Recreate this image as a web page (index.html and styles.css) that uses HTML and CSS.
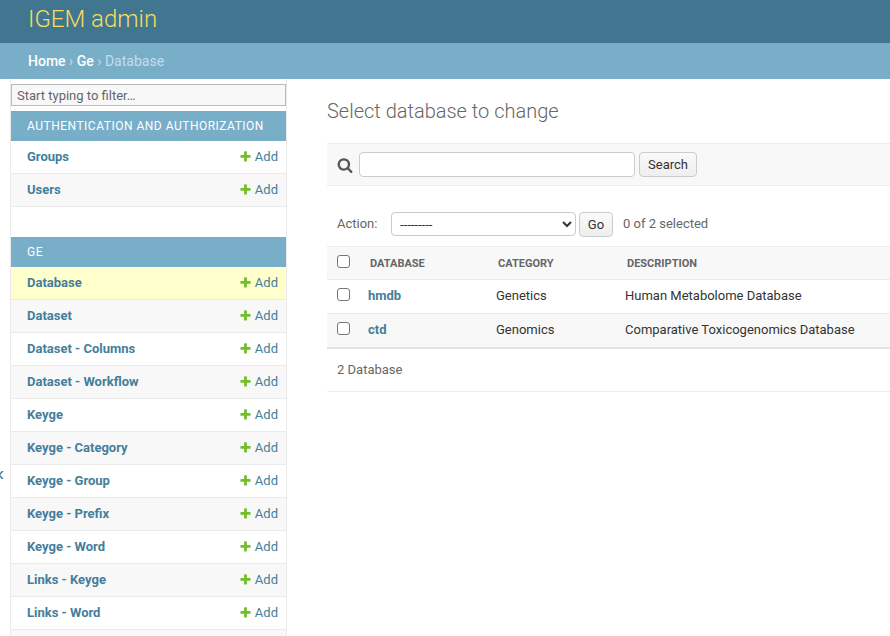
FILE: index.html
```html
<!DOCTYPE html>
<html>

<head>
  <meta charset="UTF-8">
  <meta name="viewport" content="width=device-width, initial-scale=1">
  <title>Select database to change | IGEM admin</title>
  <link rel="stylesheet" href="styles.css">
</head>

<body>
  <svg class="icon-defs" width="0" height="0">
    <symbol id="addlink" viewBox="0 0 1792 1792">
      <path fill="#70bf2b" d="M1600 796v192q0 40-28 68t-68 28h-416v416q0 40-28 68t-68 28h-192q-40 0-68-28t-28-68v-416h-416q-40 0-68-28t-28-68v-192q0-40 28-68t68-28h416v-416q0-40 28-68t68-28h192q40 0 68 28t28 68v416h416q40 0 68 28t28 68z"/>
    </symbol>
  </svg>

  <div id="header">
    <a class="branding" href="#">IGEM admin</a>
  </div>

  <div class="breadcrumbs">
    <a href="#">Home</a> › <a href="#">Ge</a> › Database
  </div>

  <div class="main">
    <button class="toggle-sidebar" aria-label="Toggle navigation">«</button>

    <div class="sidebar">
      <input class="nav-filter" type="search" placeholder="Start typing to filter…">

      <div class="module">
        <div class="caption">Authentication and Authorization</div>
        <div class="row"><a class="model" href="#">Groups</a><a class="addlink" href="#"><svg><use href="#addlink"/></svg>Add</a></div>
        <div class="row"><a class="model" href="#">Users</a><a class="addlink" href="#"><svg><use href="#addlink"/></svg>Add</a></div>
      </div>

      <div class="module">
        <div class="caption">Ge</div>
        <div class="row current"><a class="model" href="#">Database</a><a class="addlink" href="#"><svg><use href="#addlink"/></svg>Add</a></div>
        <div class="row"><a class="model" href="#">Dataset</a><a class="addlink" href="#"><svg><use href="#addlink"/></svg>Add</a></div>
        <div class="row"><a class="model" href="#">Dataset - Columns</a><a class="addlink" href="#"><svg><use href="#addlink"/></svg>Add</a></div>
        <div class="row"><a class="model" href="#">Dataset - Workflow</a><a class="addlink" href="#"><svg><use href="#addlink"/></svg>Add</a></div>
        <div class="row"><a class="model" href="#">Keyge</a><a class="addlink" href="#"><svg><use href="#addlink"/></svg>Add</a></div>
        <div class="row"><a class="model" href="#">Keyge - Category</a><a class="addlink" href="#"><svg><use href="#addlink"/></svg>Add</a></div>
        <div class="row"><a class="model" href="#">Keyge - Group</a><a class="addlink" href="#"><svg><use href="#addlink"/></svg>Add</a></div>
        <div class="row"><a class="model" href="#">Keyge - Prefix</a><a class="addlink" href="#"><svg><use href="#addlink"/></svg>Add</a></div>
        <div class="row"><a class="model" href="#">Keyge - Word</a><a class="addlink" href="#"><svg><use href="#addlink"/></svg>Add</a></div>
        <div class="row"><a class="model" href="#">Links - Keyge</a><a class="addlink" href="#"><svg><use href="#addlink"/></svg>Add</a></div>
        <div class="row"><a class="model" href="#">Links - Word</a><a class="addlink" href="#"><svg><use href="#addlink"/></svg>Add</a></div>
        <div class="row"></div>
      </div>
    </div>

    <div class="content">
      <h1>Select database to change</h1>

      <form class="toolbar">
        <svg class="search-icon" viewBox="0 0 1792 1792">
          <path fill="#555" d="M1216 832q0-185-131.5-316.5t-316.5-131.5-316.5 131.5-131.5 316.5 131.5 316.5 316.5 131.5 316.5-131.5 131.5-316.5zm512 832q0 52-38 90t-90 38q-54 0-90-38l-343-342q-179 124-399 124-143 0-273.5-55.5t-225-150-150-225-55.5-273.5 55.5-273.5 150-225 225-150 273.5-55.5 273.5 55.5 225 150 150 225 55.5 273.5q0 220-124 399l343 343q37 37 37 90z"/>
        </svg>
        <input class="search-input" type="text">
        <button class="btn search-btn" type="button">Search</button>
      </form>

      <div class="actions">
        <label>Action:</label>
        <select class="action-select">
          <option>---------</option>
          <option>Delete selected database</option>
        </select>
        <button class="btn go-btn" type="button">Go</button>
        <span class="counter">0 of 2 selected</span>
      </div>

      <table class="results">
        <thead>
          <tr>
            <th class="check"><input type="checkbox"></th>
            <th class="col-name">Database</th>
            <th class="col-cat">Category</th>
            <th>Description</th>
          </tr>
        </thead>
        <tbody>
          <tr>
            <td class="check"><input type="checkbox"></td>
            <td><a class="model" href="#">hmdb</a></td>
            <td>Genetics</td>
            <td>Human Metabolome Database</td>
          </tr>
          <tr class="alt">
            <td class="check"><input type="checkbox"></td>
            <td><a class="model" href="#">ctd</a></td>
            <td>Genomics</td>
            <td>Comparative Toxicogenomics Database</td>
          </tr>
        </tbody>
      </table>

      <p class="paginator">2 Database</p>
    </div>
  </div>
</body>

</html>
```

FILE: styles.css
```css
html, body {
  height: 100%;
}
body {
  margin: 0;
  overflow: hidden;
  font-family: Roboto, "Liberation Sans", sans-serif;
  font-size: 14px;
  color: #333;
  background: #fff;
}
a {
  text-decoration: none;
}
.icon-defs {
  position: absolute;
}

#header {
  height: 43px;
  padding-left: 28px;
  background: #417690;
  box-sizing: border-box;
}
.branding {
  display: block;
  font-size: 24px;
  font-weight: 300;
  line-height: 38px;
  color: #f5dd5d;
}
.breadcrumbs {
  height: 36px;
  padding-left: 28px;
  box-sizing: border-box;
  line-height: 36px;
  font-size: 14px;
  background: #79aec8;
  color: #c4dce8;
}
.breadcrumbs a {
  color: #fff;
  font-weight: 500;
}

.main {
  display: flex;
  position: relative;
}
.toggle-sidebar {
  position: absolute;
  left: -7px;
  top: 382px;
  padding: 0;
  border: 0;
  background: none;
  font-size: 20px;
  line-height: 24px;
  color: #447e9b;
}
.sidebar {
  flex: 0 0 275px;
  margin-left: 10px;
  padding-top: 5px;
  border-left: 1px solid #eaeaea;
  border-right: 1px solid #eaeaea;
}
.nav-filter {
  display: block;
  width: 100%;
  height: 22px;
  margin: 0 0 5px;
  padding: 2px 5px;
  box-sizing: border-box;
  border: 1px solid #bbb;
  border-radius: 0;
  background: #f8f8f8;
  font-family: inherit;
  font-size: 13px;
  color: #333;
  outline: none;
}
.nav-filter::placeholder {
  color: #666;
}
.module {
  margin-bottom: 30px;
}
.caption {
  height: 30px;
  padding-left: 16px;
  box-sizing: border-box;
  line-height: 30px;
  background: #79aec8;
  color: #fff;
  font-size: 12px;
  font-weight: 400;
  letter-spacing: 0.5px;
  text-transform: uppercase;
}
.row {
  display: flex;
  justify-content: space-between;
  align-items: center;
  height: 33px;
  padding: 0 8px 2px 16px;
  box-sizing: border-box;
  border-bottom: 1px solid #eaeaea;
  font-size: 13px;
}
.row:nth-child(odd) {
  background: #f8f8f8;
}
.row.current {
  background: #ffc;
}
.model {
  color: #447e9b;
  font-weight: 700;
}
.addlink {
  display: flex;
  align-items: center;
  color: #447e9b;
}
.addlink svg {
  width: 13px;
  height: 13px;
  margin-right: 3px;
}

.content {
  flex: 1;
  min-width: 0;
  padding-left: 40px;
}
h1 {
  margin: 20px 0 20px;
  font-size: 20px;
  font-weight: 300;
  line-height: 24px;
  color: #666;
}
.toolbar {
  display: flex;
  align-items: center;
  height: 43px;
  margin: 0 0 26px;
  padding-left: 10px;
  box-sizing: border-box;
  border-top: 1px solid #eee;
  border-bottom: 1px solid #eee;
  background: #f8f8f8;
}
.search-icon {
  width: 16px;
  height: 16px;
  margin-right: 6px;
}
.search-input {
  width: 276px;
  height: 25px;
  padding: 2px 5px;
  box-sizing: border-box;
  border: 1px solid #ccc;
  border-radius: 4px;
  background: #fff;
}
.btn {
  height: 25px;
  padding: 0;
  border: 1px solid #ccc;
  border-radius: 4px;
  background: linear-gradient(#fafafa, #eee);
  font-family: inherit;
  font-size: 13px;
  color: #333;
}
.search-btn {
  width: 58px;
  margin-left: 4px;
}
.actions {
  display: flex;
  align-items: center;
  height: 24px;
  margin-bottom: 10px;
  padding-left: 10px;
  font-size: 13px;
  color: #666;
}
.actions label {
  width: 54px;
  margin-bottom: 2px;
}
.action-select {
  width: 185px;
  height: 24px;
  padding: 0 4px;
  border: 1px solid #ccc;
  border-radius: 4px;
  background: #fff;
  font-family: inherit;
  font-size: 13px;
  color: #333;
}
.go-btn {
  width: 34px;
  margin-left: 3px;
}
.counter {
  margin-left: 10px;
  margin-bottom: 2px;
}

.results {
  width: 100%;
  border-collapse: separate;
  border-spacing: 0;
  table-layout: fixed;
  font-size: 13px;
}
.results thead th {
  height: 34px;
  padding: 0 12px;
  box-sizing: border-box;
  border-top: 1px solid #eee;
  border-bottom: 1px solid #eaeaea;
  background: #f8f8f8;
  text-align: left;
  font-size: 11px;
  font-weight: 700;
  color: #666;
  text-transform: uppercase;
}
.results td {
  height: 34px;
  padding: 0 10px 3px;
  box-sizing: border-box;
  border-bottom: 1px solid #eaeaea;
  color: #333;
}
.results .alt td {
  background: #f8f8f8;
}
.results tbody tr:last-child td {
  height: 35px;
  border-bottom: 2px solid #e4e4e4;
}
.results th.check,
.results td.check {
  width: 31px;
  padding: 0 0 0 10px;
}
.results th.col-name {
  width: 128px;
}
.results th.col-cat {
  width: 129px;
}
.results input[type="checkbox"] {
  appearance: none;
  display: block;
  width: 13px;
  height: 13px;
  margin: 0 0 3px;
  border: 1px solid #767676;
  border-radius: 3px;
  background: #fff;
}
.results td input[type="checkbox"] {
  margin-bottom: 4px;
}
.paginator {
  height: 43px;
  margin: 0;
  padding-left: 10px;
  box-sizing: border-box;
  border-bottom: 1px solid #eee;
  line-height: 41px;
  font-size: 13px;
  color: #666;
}
```
